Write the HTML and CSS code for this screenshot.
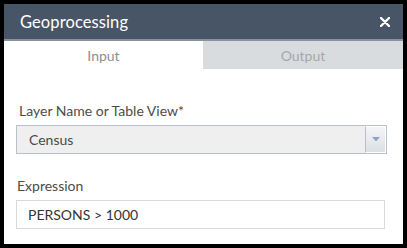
FILE: index.html
```html
<!DOCTYPE html>
<html>
<head>
<meta charset="utf-8">
<link rel="stylesheet" href="styles.css">
</head>
<body>
<div class="panel">
  <div class="header">
    <span class="title">Geoprocessing</span>
    <svg class="close" width="10" height="10" viewBox="0 0 10 10"><path d="M1 1L9 9M9 1L1 9" stroke="#fff" stroke-width="2.4" stroke-linecap="round"/></svg>
  </div>
  <div class="tabs">
    <div class="tab active">Input</div>
    <div class="tab">Output</div>
  </div>
  <div class="content">
    <div class="field">
      <div class="label first">Layer Name or Table View*</div>
      <div class="select">
        <span class="select-text">Census</span>
        <span class="arrow"><svg width="8" height="5" viewBox="0 0 8 5"><path d="M0 0H8L4 4.5Z" fill="#8ea3c9"/></svg></span>
      </div>
    </div>
    <div class="field">
      <div class="label">Expression</div>
      <div class="input">PERSONS &gt; 1000</div>
    </div>
  </div>
</div>
</body>
</html>
```

FILE: styles.css
```css
html, body {
  margin: 0;
  padding: 0;
  background: #000;
}
body {
  padding: 4px;
  font-family: "Lato", "Liberation Sans", sans-serif;
}
.panel {
  width: 399px;
  height: 240px;
  background: #fff;
  display: flex;
  flex-direction: column;
}
.header {
  height: 35px;
  background: #485566;
  border-bottom: 2px solid #8a939d;
  display: flex;
  align-items: center;
  justify-content: space-between;
  padding: 0 13px 0 16px;
  color: #fff;
}
.title {
  font-size: 16.5px;
  letter-spacing: 0.1px;
}
.tabs {
  display: grid;
  grid-template-columns: 199px 200px;
  height: 28px;
}
.tab {
  display: flex;
  align-items: center;
  justify-content: center;
  font-size: 14px;
  color: #a3a8ad;
  background: #d9dcdf;
}
.tab.active {
  background: #fff;
  color: #8a8f94;
}
.content {
  padding: 33px 16px 0 12px;
  display: flex;
  flex-direction: column;
  gap: 23px;
}
.label {
  font-size: 14px;
  color: #4c4c4c;
  margin-bottom: 6px;
  padding-left: 1px;
}
.label.first {
  padding-left: 3px;
}
.select {
  height: 27px;
  border: 1px solid #b9c0cc;
  background: #efefef;
  display: flex;
  align-items: center;
}
.select-text {
  flex: 1;
  padding-left: 12px;
  font-size: 14px;
  color: #4a4a4a;
}
.arrow {
  width: 19px;
  height: 25px;
  border: 1px solid #fff;
  border-left: 1px solid #b9c0cc;
  background: linear-gradient(#f4f5f7, #dcdfe3);
  display: flex;
  align-items: center;
  justify-content: center;
}
.input {
  height: 27px;
  border: 1px solid #d9d9d9;
  display: flex;
  align-items: center;
  padding-left: 11px;
  margin-right: 2px;
  font-size: 14px;
  color: #333;
}
```
